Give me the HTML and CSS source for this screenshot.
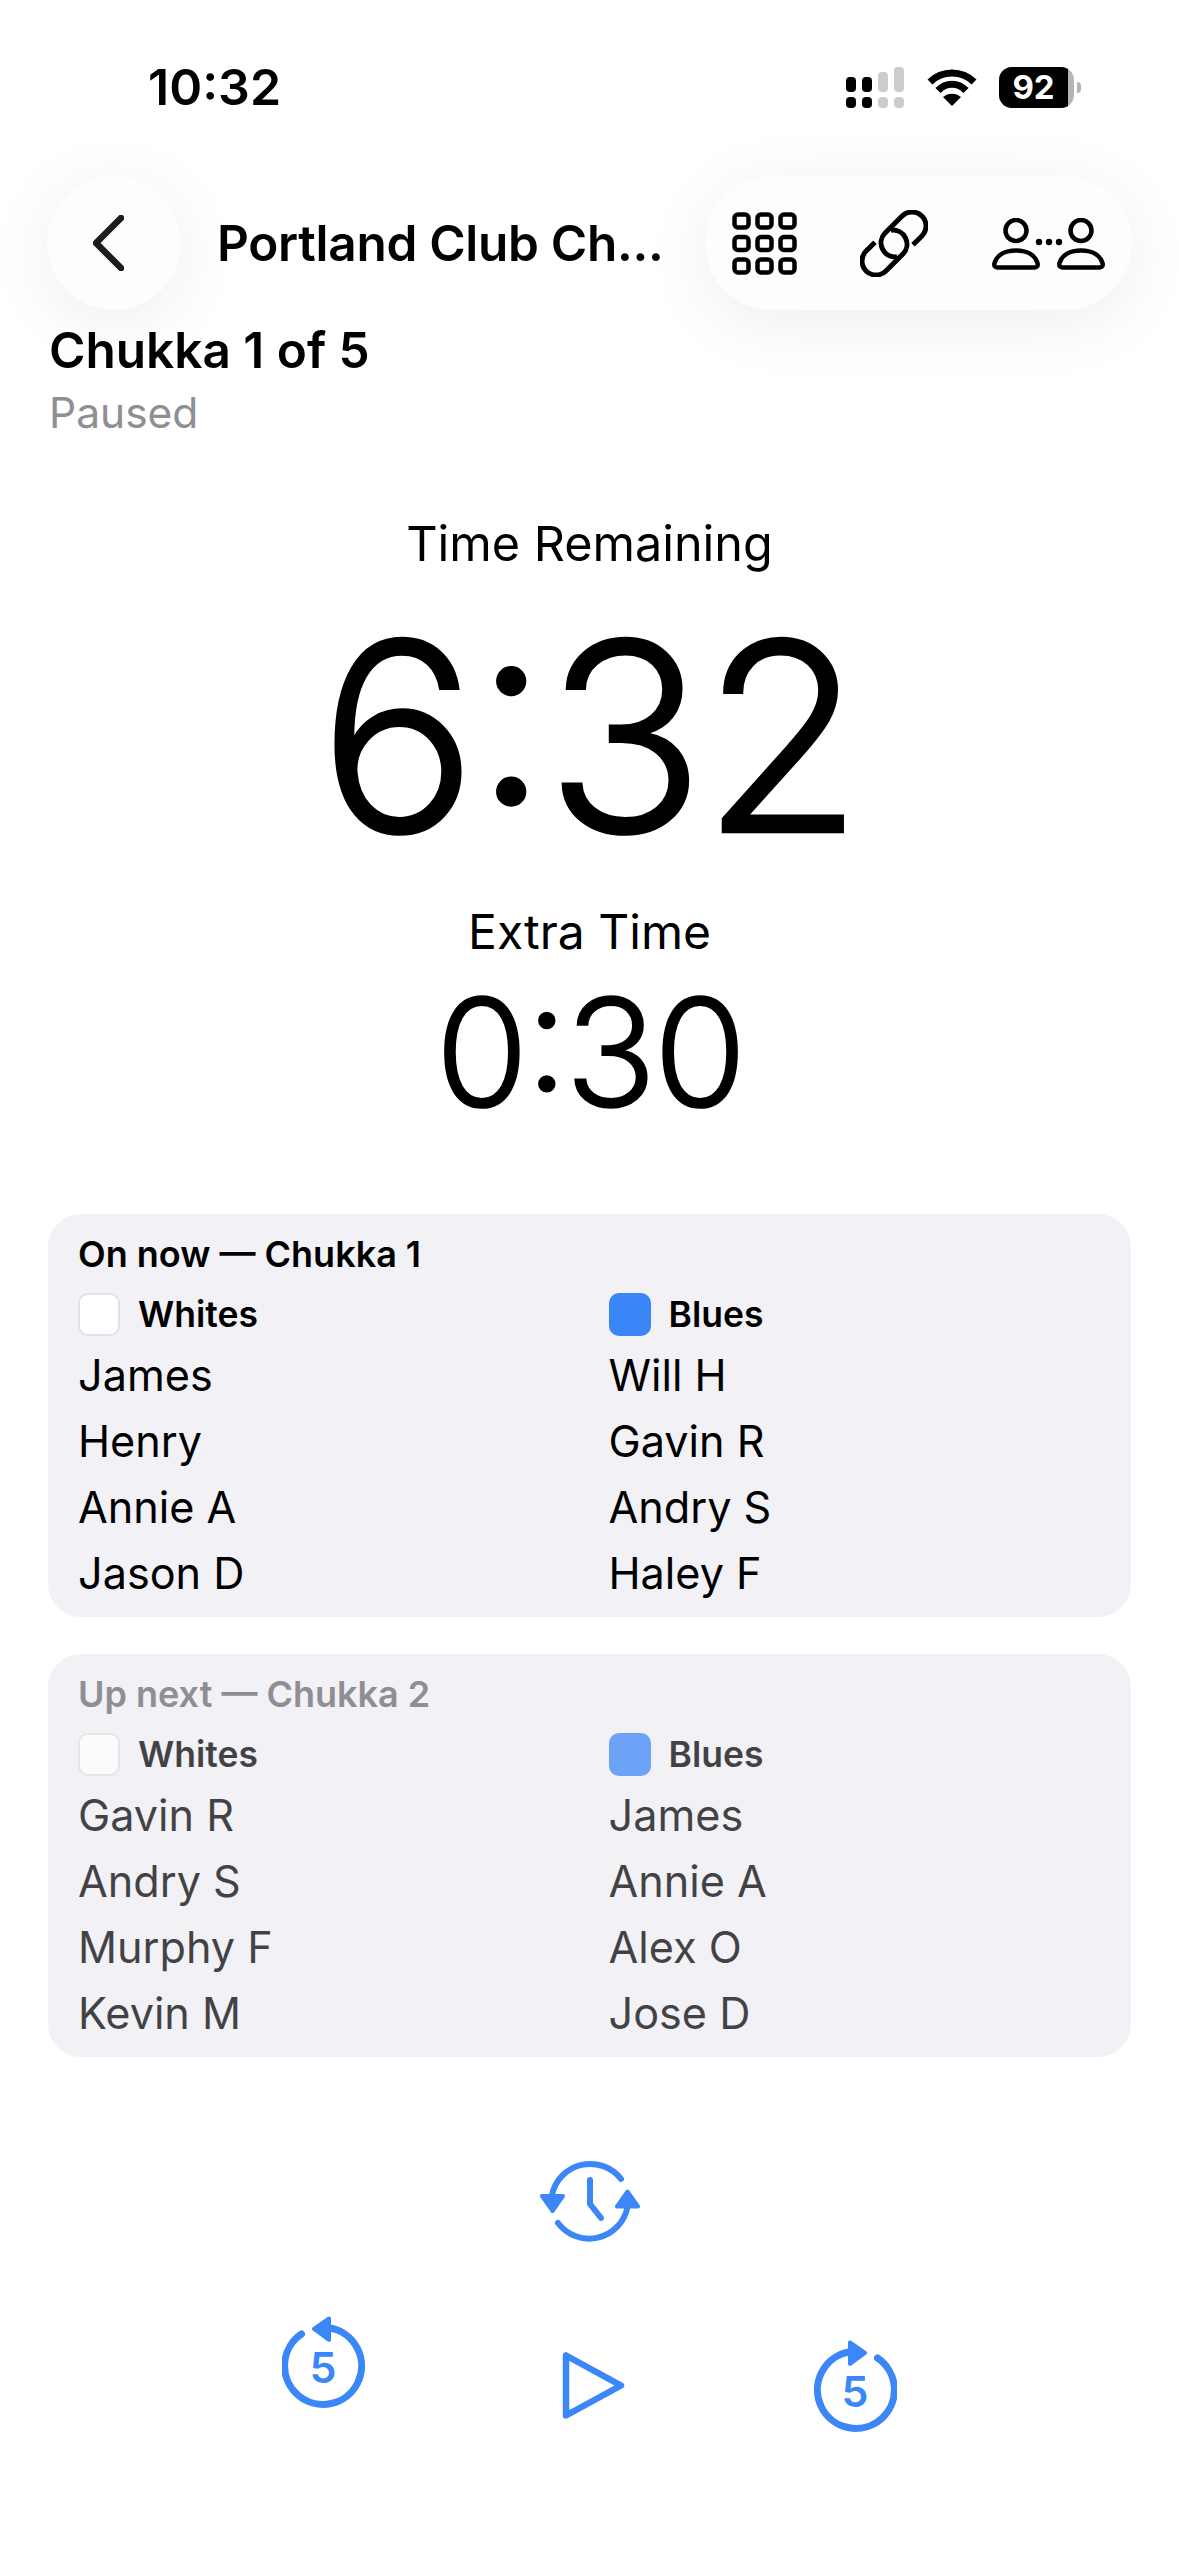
FILE: index.html
```html
<!DOCTYPE html>
<html lang="en">
<head>
<meta charset="UTF-8" />
<meta name="viewport" content="width=device-width, initial-scale=1" />
<title>Portland Club Chukkas</title>
<link rel="stylesheet" href="styles.css">
</head>
<body>
  <div class="status-bar">
    <span class="clock">10:32</span>
    <div class="status-icons">
      <svg class="signal" width="58" height="41" viewBox="0 0 58 41">
        <rect x="0" y="10" width="10" height="15" rx="4" fill="#000"/>
        <rect x="16" y="10" width="10" height="15" rx="4" fill="#000"/>
        <rect x="32" y="5" width="10" height="20" rx="4" fill="#ccc"/>
        <rect x="48" y="0" width="10" height="25" rx="4" fill="#ccc"/>
        <rect x="0" y="30" width="10" height="11" rx="4" fill="#000"/>
        <rect x="16" y="30" width="10" height="11" rx="4" fill="#000"/>
        <rect x="32" y="30" width="10" height="11" rx="4" fill="#ccc"/>
        <rect x="48" y="30" width="10" height="11" rx="4" fill="#ccc"/>
      </svg>
      <svg class="wifi" width="50" height="37" viewBox="0 0 50 37">
        <path d="M3 13 C15 1 35 1 47 13" fill="none" stroke="#000" stroke-width="7"/>
        <path d="M11 21.5 C19 13 31 13 39 21.5" fill="none" stroke="#000" stroke-width="7"/>
        <path d="M16 28 C21 23.5 29 23.5 34 28 L25 37 Z" fill="#000"/>
      </svg>
      <div class="battery">
        <div class="battery-body">
          <div class="battery-fill">92</div>
        </div>
        <span class="battery-nub"></span>
      </div>
    </div>
  </div>

  <header class="topbar">
    <button class="round-btn" aria-label="Back">
      <svg width="31" height="56" viewBox="0 0 31 56">
        <polyline points="28,3 3,28 28,53" fill="none" stroke="#1c1c1e" stroke-width="6.5" stroke-linecap="round" stroke-linejoin="round"/>
      </svg>
    </button>
    <h1 class="title">Portland Club Ch...</h1>
    <div class="pill">
      <svg class="ic-grid" width="65" height="63" viewBox="0 0 65 63" fill="none" stroke="#000" stroke-width="4.5">
        <rect x="2.5" y="2.5" width="14" height="13" rx="3.5"/>
        <rect x="25.5" y="2.5" width="14" height="13" rx="3.5"/>
        <rect x="48.5" y="2.5" width="14" height="13" rx="3.5"/>
        <rect x="2.5" y="25" width="14" height="13" rx="3.5"/>
        <rect x="25.5" y="25" width="14" height="13" rx="3.5"/>
        <rect x="48.5" y="25" width="14" height="13" rx="3.5"/>
        <rect x="2.5" y="47.5" width="14" height="13" rx="3.5"/>
        <rect x="25.5" y="47.5" width="14" height="13" rx="3.5"/>
        <rect x="48.5" y="47.5" width="14" height="13" rx="3.5"/>
      </svg>
      <svg class="ic-link" width="68" height="67" viewBox="0 0 68 67" fill="none" stroke="#000" stroke-width="5">
        <path d="M53 34.8 L61.9 25.9 A14 14 0 0 0 42.1 6.1 L25.1 23.1 A14 14 0 0 0 37 46.8"/>
        <path d="M15 32.2 L6.1 41.1 A14 14 0 0 0 25.9 60.9 L42.9 43.9 A14 14 0 0 0 31 20.2"/>
      </svg>
      <svg class="ic-people" width="113" height="52" viewBox="0 0 113 52" fill="none" stroke="#000" stroke-width="4.5">
        <circle cx="24" cy="12.5" r="10.5"/>
        <path d="M2.5 45 C5 37 13 32.5 24 32.5 C35 32.5 43 37 45.5 45 Q46.5 49.5 42.5 49.5 L5.5 49.5 Q1.5 49.5 2.5 45 Z"/>
        <circle cx="89" cy="12.5" r="10.5"/>
        <path d="M67.5 45 C70 37 78 32.5 89 32.5 C100 32.5 108 37 110.5 45 Q111.5 49.5 107.5 49.5 L70.5 49.5 Q66.5 49.5 67.5 45 Z"/>
        <g fill="#000" stroke="none">
          <circle cx="47" cy="24" r="3.2"/>
          <circle cx="57" cy="24" r="3.2"/>
          <circle cx="67" cy="24" r="3.2"/>
        </g>
      </svg>
    </div>
  </header>

  <section class="summary">
    <div class="chukka">Chukka 1 of 5</div>
    <div class="state">Paused</div>
  </section>

  <section class="timers">
    <div class="timer-label">Time Remaining</div>
    <div class="time-main">6:32</div>
    <div class="timer-label extra-label">Extra Time</div>
    <div class="time-extra">0:30</div>
  </section>

  <section class="card">
    <h2 class="card-title">On now — Chukka 1</h2>
    <div class="teams">
      <div class="team">
        <div class="team-head"><span class="swatch white"></span>Whites</div>
        <div class="player">James</div>
        <div class="player">Henry</div>
        <div class="player">Annie A</div>
        <div class="player">Jason D</div>
      </div>
      <div class="team">
        <div class="team-head"><span class="swatch blue"></span>Blues</div>
        <div class="player">Will H</div>
        <div class="player">Gavin R</div>
        <div class="player">Andry S</div>
        <div class="player">Haley F</div>
      </div>
    </div>
  </section>

  <section class="card next">
    <h2 class="card-title">Up next — Chukka 2</h2>
    <div class="teams">
      <div class="team">
        <div class="team-head"><span class="swatch white"></span>Whites</div>
        <div class="player">Gavin R</div>
        <div class="player">Andry S</div>
        <div class="player">Murphy F</div>
        <div class="player">Kevin M</div>
      </div>
      <div class="team">
        <div class="team-head"><span class="swatch blue"></span>Blues</div>
        <div class="player">James</div>
        <div class="player">Annie A</div>
        <div class="player">Alex O</div>
        <div class="player">Jose D</div>
      </div>
    </div>
  </section>

  <section class="controls">
    <div class="control-top">
      <svg width="100" height="84" viewBox="0 0 100 84" fill="none" stroke="#3c87f7" stroke-width="6" stroke-linecap="round" stroke-linejoin="round">
        <path d="M81 20 A39 39 0 0 0 12 36"/>
        <path d="M18 64 A39 39 0 0 0 87.5 48"/>
        <path d="M2 37 H23 L12.5 52 Z" fill="#3c87f7" stroke-width="4"/>
        <path d="M77 47.5 H98 L87.5 32.5 Z" fill="#3c87f7" stroke-width="4"/>
        <polyline points="50,21 50,45 61,59"/>
      </svg>
    </div>
    <div class="control-row">
      <svg class="rewind" width="84" height="92" viewBox="0 0 84 92" fill="none" stroke="#3c87f7" stroke-width="7" stroke-linecap="round" stroke-linejoin="round">
        <path d="M19.5 18 A38.5 38.5 0 1 0 48 12"/>
        <path d="M32 13 L47 2.5 V24 Z" fill="#3c87f7" stroke-width="4"/>
        <text class="skip-num" x="41" y="67" text-anchor="middle">5</text>
      </svg>
      <svg class="play" width="63" height="69" viewBox="0 0 63 69" fill="none" stroke="#3c87f7" stroke-width="6.5" stroke-linejoin="round">
        <path d="M4 4.5 V64.5 L59 34.5 Z"/>
      </svg>
      <svg class="forward" width="84" height="92" viewBox="0 0 84 92" fill="none" stroke="#3c87f7" stroke-width="7" stroke-linecap="round" stroke-linejoin="round">
        <path d="M64.5 18 A38.5 38.5 0 1 1 36 12"/>
        <path d="M52 13 L37 2.5 V24 Z" fill="#3c87f7" stroke-width="4"/>
        <text class="skip-num" x="42" y="67" text-anchor="middle">5</text>
      </svg>
    </div>
  </section>
</body>
</html>
```

FILE: styles.css
```css
* {
  box-sizing: border-box;
}
body {
  margin: 0;
  background: #fff;
  color: #000;
  font-family: Inter, "Noto Sans", sans-serif;
  width: 1179px;
  height: 2556px;
  overflow: hidden;
}

/* status bar */
.status-bar {
  height: 176px;
  display: flex;
  justify-content: space-between;
  align-items: flex-start;
  padding: 60px 98px 0 148px;
}
.clock {
  font-size: 50px;
  font-weight: 600;
  line-height: 54px;
}
.status-icons {
  display: flex;
  align-items: flex-start;
  padding-top: 7px;
}
.signal {
  margin-right: 23px;
}
.wifi {
  margin-top: 2px;
  margin-right: 22px;
}
.battery {
  display: flex;
  align-items: center;
}
.battery-body {
  width: 75px;
  height: 41px;
  border-radius: 13px;
  background: #b5b5b5;
  overflow: hidden;
}
.battery-fill {
  width: 92%;
  height: 100%;
  background: #000;
  color: #fff;
  font-size: 33px;
  font-weight: 700;
  line-height: 41px;
  text-align: center;
}
.battery-nub {
  width: 4px;
  height: 11px;
  margin-left: 3px;
  border-radius: 0 4px 4px 0;
  background: #b5b5b5;
}

/* header */
.topbar {
  height: 134px;
  display: flex;
  align-items: center;
  padding: 0 47px;
}
.round-btn {
  width: 134px;
  height: 134px;
  padding: 0 12px 0 0;
  border: 0;
  border-radius: 50%;
  background: #fdfdfd;
  box-shadow: 0 12px 70px rgba(0, 0, 0, 0.07);
  display: flex;
  align-items: center;
  justify-content: center;
}
.title {
  margin: 0 0 0 36px;
  flex: 1;
  font-size: 49.5px;
  font-weight: 600;
  letter-spacing: -0.3px;
  white-space: nowrap;
}
.pill {
  width: 427px;
  height: 134px;
  border-radius: 67px;
  background: #fdfdfd;
  box-shadow: 0 12px 70px rgba(0, 0, 0, 0.07);
  display: flex;
  align-items: center;
  padding-left: 27px;
}
.ic-link {
  margin-left: 63px;
}
.ic-people {
  margin-left: 64px;
  margin-top: 1px;
}

.summary {
  padding: 12px 49px 0;
}
.chukka {
  font-size: 49.5px;
  font-weight: 600;
  line-height: 56px;
}
.state {
  margin-top: 7px;
  color: #8e8e93;
  font-size: 42.5px;
  line-height: 56px;
}

/* timers */
.timers {
  text-align: center;
  padding-top: 72px;
}
.timer-label {
  font-size: 48.5px;
  line-height: 62px;
}
.time-main {
  font-size: 263px;
  font-weight: 300;
  font-feature-settings: "case";
  -webkit-text-stroke: 2.5px #000;
  letter-spacing: -3px;
  line-height: 310px;
  margin-top: 6px;
}
.extra-label {
  margin-top: 10px;
  font-size: 48px;
}
.time-extra {
  font-size: 151px;
  font-weight: 300;
  font-feature-settings: "case";
  -webkit-text-stroke: 1.5px #000;
  letter-spacing: -3px;
  line-height: 180px;
  margin-top: -1px;
}

/* team cards */
.card {
  margin: 72px 48px 0;
  height: 403px;
  padding: 17px 30px 0;
  border-radius: 33px;
  background: #f1f1f6;
}
.card + .card {
  margin-top: 37px;
}
.card-title {
  margin: 0;
  font-size: 36px;
  font-weight: 600;
  line-height: 46px;
}
.teams {
  display: grid;
  grid-template-columns: repeat(2, 1fr);
  column-gap: 38px;
  margin-top: 16px;
}
.team-head {
  display: flex;
  align-items: center;
  gap: 18px;
  height: 42px;
  margin-bottom: 7px;
  font-size: 35.5px;
  font-weight: 600;
}
.swatch {
  width: 42px;
  height: 43px;
  border-radius: 10px;
}
.swatch.white {
  background: #fff;
  border: 2px solid #e2e2e6;
}
.swatch.blue {
  background: #3b86f6;
}
.player {
  font-size: 43.2px;
  line-height: 66px;
}
.next .card-title {
  color: #8e8e93;
}
.next .team {
  opacity: 0.72;
}

/* bottom controls */
.controls {
  padding-top: 102px;
}
.control-top {
  display: flex;
  padding-left: 540px;
}
.control-row {
  display: flex;
  align-items: flex-start;
  padding: 73px 0 0 282px;
}
.play {
  margin: 35px 0 0 196px;
}
.forward {
  margin: 24px 0 0 188px;
}
.skip-num {
  fill: #3c87f7;
  stroke: none;
  font-size: 43px;
  font-weight: 600;
  font-family: Inter, sans-serif;
}
```
